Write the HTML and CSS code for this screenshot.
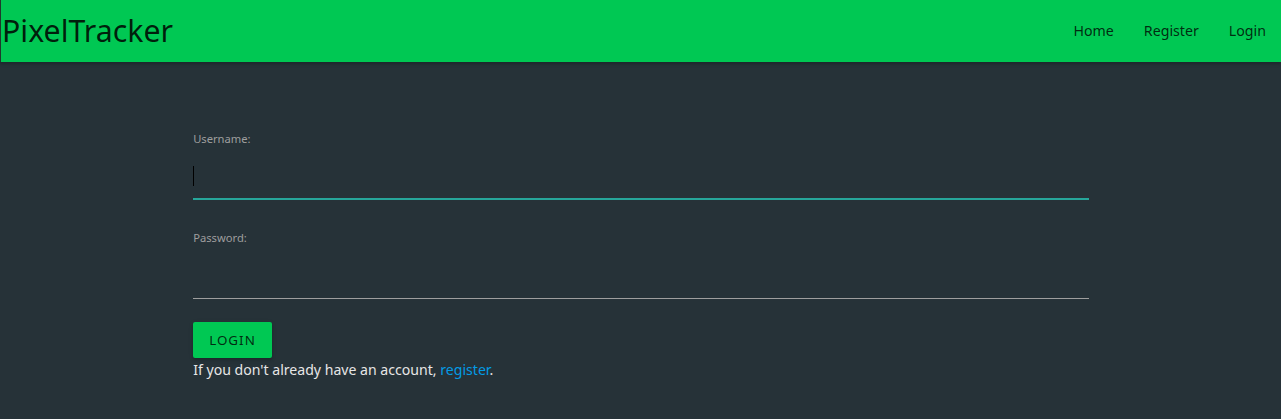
FILE: index.html
```html
<!DOCTYPE html>
<html lang="en">
<head>
<meta charset="utf-8">
<title>PixelTracker</title>
<link rel="stylesheet" href="styles.css">
</head>
<body>
<nav class="navbar">
  <a class="brand" href="#">PixelTracker</a>
  <ul class="nav-links">
    <li><a href="#">Home</a></li>
    <li><a href="#">Register</a></li>
    <li><a href="#">Login</a></li>
  </ul>
</nav>
<main class="container">
  <form class="login-form">
    <div class="field">
      <label class="field-label" for="username">Username:</label>
      <div class="input focused"><span class="caret"></span></div>
    </div>
    <div class="field">
      <label class="field-label" for="password">Password:</label>
      <div class="input"></div>
    </div>
    <button class="btn" type="button">Login</button>
    <p class="hint">If you don't already have an account, <a href="#">register</a>.</p>
  </form>
</main>
</body>
</html>
```

FILE: styles.css
```css
* { box-sizing: border-box; }

html, body {
  margin: 0;
  padding: 0;
}

body {
  background: #263238;
  font-family: "Noto Sans", "Open Sans", sans-serif;
  font-size: 14px;
  color: #e6e6e6;
  height: 419px;
  overflow: hidden;
}

.navbar {
  height: 62px;
  background: #00c853;
  border-left: 1px solid #1f3a2c;
  display: flex;
  align-items: center;
  justify-content: space-between;
  box-shadow: 0 2px 2px 0 rgba(0,0,0,0.14), 0 1px 5px 0 rgba(0,0,0,0.12);
}

.brand {
  font-size: 30.3px;
  color: rgba(0,0,0,0.85);
  text-decoration: none;
  padding-left: 1px;
  margin-top: -2px;
}

.nav-links {
  list-style: none;
  display: flex;
  margin: 0;
  padding: 0;
  margin-top: -2px;
}

.nav-links a {
  display: block;
  padding: 0 15px;
  font-size: 14.2px;
  color: rgba(0,0,0,0.8);
  text-decoration: none;
}

.container {
  width: 70%;
  margin: 0 auto;
  padding-left: 1px;
}

.login-form {
  padding-top: 69px;
}

.field-label {
  display: block;
  font-size: 11.2px;
  line-height: 16px;
  color: #9e9e9e;
}

.input {
  height: 46px;
  margin-top: 6px;
  border-bottom: 1px solid #9e9e9e;
  position: relative;
}

.field + .field { margin-top: 31px; }

.field + .field .input { margin-top: 7px; }

.input.focused {
  border-bottom-color: #26a69a;
  box-shadow: 0 1px 0 0 #26a69a;
}

.caret {
  position: absolute;
  left: 0;
  top: 13px;
  width: 1px;
  height: 20px;
  background: #000;
}

.btn {
  display: block;
  margin-top: 23px;
  height: 36px;
  padding: 0 16px;
  border: none;
  border-radius: 2px;
  background: #00c853;
  color: rgba(0,0,0,0.8);
  font-family: inherit;
  font-size: 13.4px;
  letter-spacing: 1px;
  text-transform: uppercase;
  box-shadow: 0 2px 2px 0 rgba(0,0,0,0.14), 0 1px 5px 0 rgba(0,0,0,0.12);
}

.hint {
  margin: 0;
  line-height: 24px;
  font-size: 14.1px;
  color: #e6e6e6;
}

.hint a {
  color: #039be5;
  text-decoration: none;
}
```
